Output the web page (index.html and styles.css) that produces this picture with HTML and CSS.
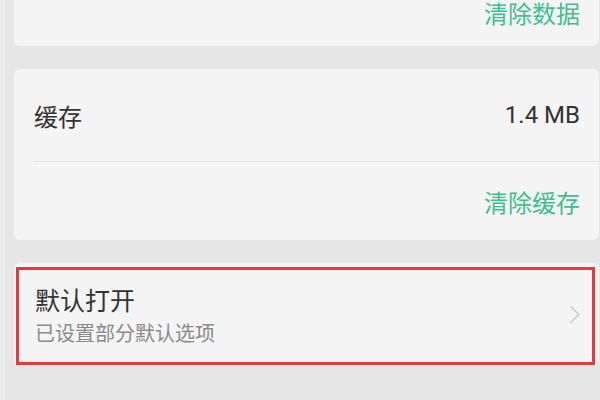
FILE: index.html
```html
<!DOCTYPE html>
<html lang="zh-CN">
<head>
<meta charset="utf-8">
<title>应用信息</title>
<link rel="stylesheet" href="styles.css">
</head>
<body>
<div class="page">
  <section class="card card-data">
    <div class="row row-action">
      <span class="action">清除数据</span>
    </div>
  </section>

  <section class="card card-cache">
    <div class="row row-info">
      <span class="label">缓存</span>
      <span class="value">1.4 MB</span>
    </div>
    <div class="divider"></div>
    <div class="row row-action2">
      <span class="action">清除缓存</span>
    </div>
  </section>

  <section class="card card-default">
    <div class="default-text">
      <div class="title">默认打开</div>
      <div class="subtitle">已设置部分默认选项</div>
    </div>
    <svg class="chevron" width="12" height="19" viewBox="0 0 12 19">
      <polyline points="1.5,1.5 10,9.5 1.5,17.5" fill="none" stroke="#c9c9c9" stroke-width="1.4" stroke-linecap="round" stroke-linejoin="round"/>
    </svg>
    <div class="highlight"></div>
  </section>
</div>
</body>
</html>
```

FILE: styles.css
```css
html, body {
  margin: 0;
  padding: 0;
  background: #e6e6e6;
}

body {
  width: 600px;
  height: 400px;
  overflow: hidden;
  font-family: "Noto Sans CJK SC", "Noto Sans", Roboto, sans-serif;
}

.page {
  border-left: 5px solid #ececec;
  padding-left: 9px;
  padding-right: 1px;
  height: 400px;
  box-sizing: border-box;
  display: flex;
  flex-direction: column;
}

.card {
  background: #f4f4f4;
  border-radius: 6px;
}

.card-data {
  height: 46px;
  border-top-left-radius: 0;
  border-top-right-radius: 0;
  margin-bottom: 23px;
}

.row-action {
  display: flex;
  justify-content: flex-end;
  padding-right: 19px;
  padding-top: 1px;
}

.row-action .action {
  line-height: 24px;
}

.action {
  color: #3fbf8e;
  font-size: 24px;
}

.card-cache {
  height: 171px;
  display: flex;
  flex-direction: column;
  margin-bottom: 23px;
}

.row-info {
  height: 92px;
  display: flex;
  align-items: center;
  justify-content: space-between;
  padding: 0 19px 0 20px;
}

.label {
  font-size: 24px;
  color: #333333;
}

.value {
  font-family: Roboto, "Noto Sans", sans-serif;
  font-size: 24px;
  color: #333333;
}

.divider {
  height: 1px;
  background: #e7e7e7;
  margin-left: 19px;
}

.row-action2 {
  flex: 1;
  display: flex;
  align-items: center;
  justify-content: flex-end;
  padding-right: 19px;
}

.card-default {
  position: relative;
  height: 103px;
  box-sizing: border-box;
  display: flex;
  align-items: center;
  justify-content: space-between;
  padding: 0 18px 0 21px;
}

.default-text {
  display: flex;
  flex-direction: column;
  gap: 6px;
}

.title {
  font-size: 25px;
  line-height: 30px;
  color: #333333;
}

.subtitle {
  font-size: 20px;
  line-height: 26px;
  color: #8a8a8a;
}

.chevron {
  display: block;
}

.highlight {
  position: absolute;
  left: 2px;
  top: 4px;
  right: 4px;
  bottom: 1px;
  border: 3px solid #e8383d;
  pointer-events: none;
}
```
